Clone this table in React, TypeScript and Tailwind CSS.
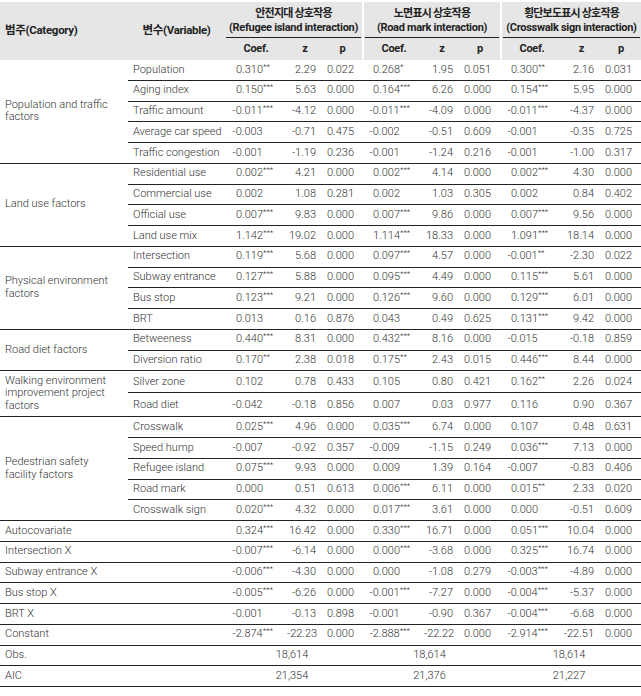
import React from "react";

type Cell = [string, string, string];
type Row = { name: string; g: Cell[]; h?: string };
type Group = { cat: string[]; rows: Row[] };

const groups: Group[] = [
  {
    cat: ["Population and traffic", "factors"],
    rows: [
      { name: "Population", g: [["0.310**", "2.29", "0.022"], ["0.268*", "1.95", "0.051"], ["0.300**", "2.16", "0.031"]] },
      { name: "Aging index", g: [["0.150***", "5.63", "0.000"], ["0.164***", "6.26", "0.000"], ["0.154***", "5.95", "0.000"]] },
      { name: "Traffic amount", g: [["-0.011***", "-4.12", "0.000"], ["-0.011***", "-4.09", "0.000"], ["-0.011***", "-4.37", "0.000"]] },
      { name: "Average car speed", g: [["-0.003", "-0.71", "0.475"], ["-0.002", "-0.51", "0.609"], ["-0.001", "-0.35", "0.725"]] },
      { name: "Traffic congestion", g: [["-0.001", "-1.19", "0.236"], ["-0.001", "-1.24", "0.216"], ["-0.001", "-1.00", "0.317"]] },
    ],
  },
  {
    cat: ["Land use factors"],
    rows: [
      { name: "Residential use", g: [["0.002***", "4.21", "0.000"], ["0.002***", "4.14", "0.000"], ["0.002***", "4.30", "0.000"]] },
      { name: "Commercial use", g: [["0.002", "1.08", "0.281"], ["0.002", "1.03", "0.305"], ["0.002", "0.84", "0.402"]] },
      { name: "Official use", g: [["0.007***", "9.83", "0.000"], ["0.007***", "9.86", "0.000"], ["0.007***", "9.56", "0.000"]] },
      { name: "Land use mix", g: [["1.142***", "19.02", "0.000"], ["1.114***", "18.33", "0.000"], ["1.091***", "18.14", "0.000"]] },
    ],
  },
  {
    cat: ["Physical environment", "factors"],
    rows: [
      { name: "Intersection", g: [["0.119***", "5.68", "0.000"], ["0.097***", "4.57", "0.000"], ["-0.001**", "-2.30", "0.022"]] },
      { name: "Subway entrance", g: [["0.127***", "5.88", "0.000"], ["0.095***", "4.49", "0.000"], ["0.115***", "5.61", "0.000"]] },
      { name: "Bus stop", g: [["0.123***", "9.21", "0.000"], ["0.126***", "9.60", "0.000"], ["0.129***", "6.01", "0.000"]] },
      { name: "BRT", g: [["0.013", "0.16", "0.876"], ["0.043", "0.49", "0.625"], ["0.131***", "9.42", "0.000"]] },
    ],
  },
  {
    cat: ["Road diet factors"],
    rows: [
      { name: "Betweeness", g: [["0.440***", "8.31", "0.000"], ["0.432***", "8.16", "0.000"], ["-0.015", "-0.18", "0.859"]] },
      { name: "Diversion ratio", g: [["0.170**", "2.38", "0.018"], ["0.175**", "2.43", "0.015"], ["0.446***", "8.44", "0.000"]] },
    ],
  },
  {
    cat: ["Walking environment", "improvement project", "factors"],
    rows: [
      { name: "Silver zone", h: "h-[22px]", g: [["0.102", "0.78", "0.433"], ["0.105", "0.80", "0.421"], ["0.162**", "2.26", "0.024"]] },
      { name: "Road diet", h: "h-[24px]", g: [["-0.042", "-0.18", "0.856"], ["0.007", "0.03", "0.977"], ["0.116", "0.90", "0.367"]] },
    ],
  },
  {
    cat: ["Pedestrian safety", "facility factors"],
    rows: [
      { name: "Crosswalk", g: [["0.025***", "4.96", "0.000"], ["0.035***", "6.74", "0.000"], ["0.107", "0.48", "0.631"]] },
      { name: "Speed hump", g: [["-0.007", "-0.92", "0.357"], ["-0.009", "-1.15", "0.249"], ["0.036***", "7.13", "0.000"]] },
      { name: "Refugee island", g: [["0.075***", "9.93", "0.000"], ["0.009", "1.39", "0.164"], ["-0.007", "-0.83", "0.406"]] },
      { name: "Road mark", g: [["0.000", "0.51", "0.613"], ["0.006***", "6.11", "0.000"], ["0.015**", "2.33", "0.020"]] },
      { name: "Crosswalk sign", g: [["0.020***", "4.32", "0.000"], ["0.017***", "3.61", "0.000"], ["0.000", "-0.51", "0.609"]] },
    ],
  },
];

const extraRows: Row[] = [
  { name: "Autocovariate", g: [["0.324***", "16.42", "0.000"], ["0.330***", "16.71", "0.000"], ["0.051***", "10.04", "0.000"]] },
  { name: "Intersection X", g: [["-0.007***", "-6.14", "0.000"], ["0.000***", "-3.68", "0.000"], ["0.325***", "16.74", "0.000"]] },
  { name: "Subway entrance X", g: [["-0.006***", "-4.30", "0.000"], ["0.000", "-1.08", "0.279"], ["-0.003***", "-4.89", "0.000"]] },
  { name: "Bus stop X", g: [["-0.005***", "-6.26", "0.000"], ["-0.001***", "-7.27", "0.000"], ["-0.004***", "-5.37", "0.000"]] },
  { name: "BRT X", g: [["-0.001", "-0.13", "0.898"], ["-0.001", "-0.90", "0.367"], ["-0.004***", "-6.68", "0.000"]] },
  { name: "Constant", g: [["-2.874***", "-22.23", "0.000"], ["-2.888***", "-22.22", "0.000"], ["-2.914***", "-22.51", "0.000"]] },
];

const stats = [
  { name: "Obs.", vals: ["18,614", "18,614", "18,614"] },
  { name: "AIC", vals: ["21,354", "21,376", "21,227"] },
];

const groupW = ["w-[137px]", "w-[138px]", "w-[141px]"];
const zW = ["w-[36px]", "w-[36px]", "w-[39px]"];

const titles = [
  ["안전지대 상호작용", "(Refugee island interaction)"],
  ["노면표시 상호작용", "(Road mark interaction)"],
  ["횡단보도표시 상호작용", "(Crosswalk sign interaction)"],
];

const Coef = ({ v }: { v: string }) => {
  const m = v.match(/^(-?[\d.]+)(\**)$/);
  const num = m ? m[1] : v;
  const stars = m ? m[2] : "";
  return (
    <div className="w-[62px] shrink-0 pl-[11px] whitespace-nowrap">
      <span className={num.startsWith("-") ? "-ml-[3.5px]" : ""}>{num}</span>
      {stars && <sup className="text-[8px]">{stars}</sup>}
    </div>
  );
};

const Values = ({ g }: { g: Cell[] }) => (
  <>
    {g.map((c, i) => (
      <div key={i} className={`flex shrink-0 items-center ${groupW[i]}`}>
        <Coef v={c[0]} />
        <div className={`${zW[i]} shrink-0 pr-[7px] text-right`}>{c[1]}</div>
        <div className="flex-1 pl-[4px]">{c[2]}</div>
      </div>
    ))}
  </>
);

export default function App() {
  return (
    <div className="min-h-screen bg-white pt-[2px] font-['Roboto','Noto_Sans_CJK_KR',sans-serif] text-[11px] text-[#333]">
      <div className="w-[641px]">
        {/* header */}
        <div className="flex h-[58px] bg-[#e6e6e6] font-bold tracking-[-0.3px] text-[#222]">
          <div className="flex w-[128px] shrink-0 items-center pl-[5px] text-[11.5px]">범주(Category)</div>
          <div className="flex w-[97px] shrink-0 items-center justify-center text-[11.5px]">변수(Variable)</div>
          {titles.map((t, i) => (
            <div key={i} className={`flex shrink-0 flex-col ${groupW[i]} ${i > 0 ? "border-l-2 border-white" : ""}`}>
              <div className="mx-[1px] flex h-[36px] flex-col items-center justify-center border-b border-[#222] pt-[2px] leading-[13.5px]">
                <span className="tracking-[-0.8px]">{t[0]}</span>
                <span className="whitespace-nowrap">{t[1]}</span>
              </div>
              <div className="flex flex-1 items-center">
                <div className={`${i > 0 ? "w-[60px]" : "w-[62px]"} shrink-0 text-center`}>Coef.</div>
                <div className={`${zW[i]} shrink-0 text-center`}>z</div>
                <div className="flex-1 text-center">p</div>
              </div>
            </div>
          ))}
        </div>

        {/* grouped rows */}
        <div className="font-light">
          {groups.map((grp) => (
            <div key={grp.cat.join()} className="flex">
              <div className="flex w-[128px] shrink-0 flex-col justify-center border-b border-[#222] pl-[5px] leading-[12.7px]">
                {grp.cat.map((l) => (
                  <span key={l}>{l}</span>
                ))}
              </div>
              <div className="flex flex-1 flex-col">
                {grp.rows.map((r) => (
                  <div key={r.name} className={`flex items-center border-b border-[#222] ${r.h ?? "h-[20.75px]"}`}>
                    <div className="w-[97px] shrink-0 pl-[5px] whitespace-nowrap">{r.name}</div>
                    <Values g={r.g} />
                  </div>
                ))}
              </div>
            </div>
          ))}

          {extraRows.map((r) => (
            <div key={r.name} className="flex h-[20.75px] items-center border-b border-[#222]">
              <div className="w-[225px] shrink-0 pl-[5px]">{r.name}</div>
              <Values g={r.g} />
            </div>
          ))}

          {stats.map((s) => (
            <div key={s.name} className="flex h-[20.75px] items-center border-b border-[#222]">
              <div className="w-[225px] shrink-0 pl-[5px]">{s.name}</div>
              {s.vals.map((v, i) => (
                <div key={i} className={`${groupW[i]} shrink-0 pr-[3px] text-center`}>
                  {v}
                </div>
              ))}
            </div>
          ))}
        </div>
      </div>
    </div>
  );
}
